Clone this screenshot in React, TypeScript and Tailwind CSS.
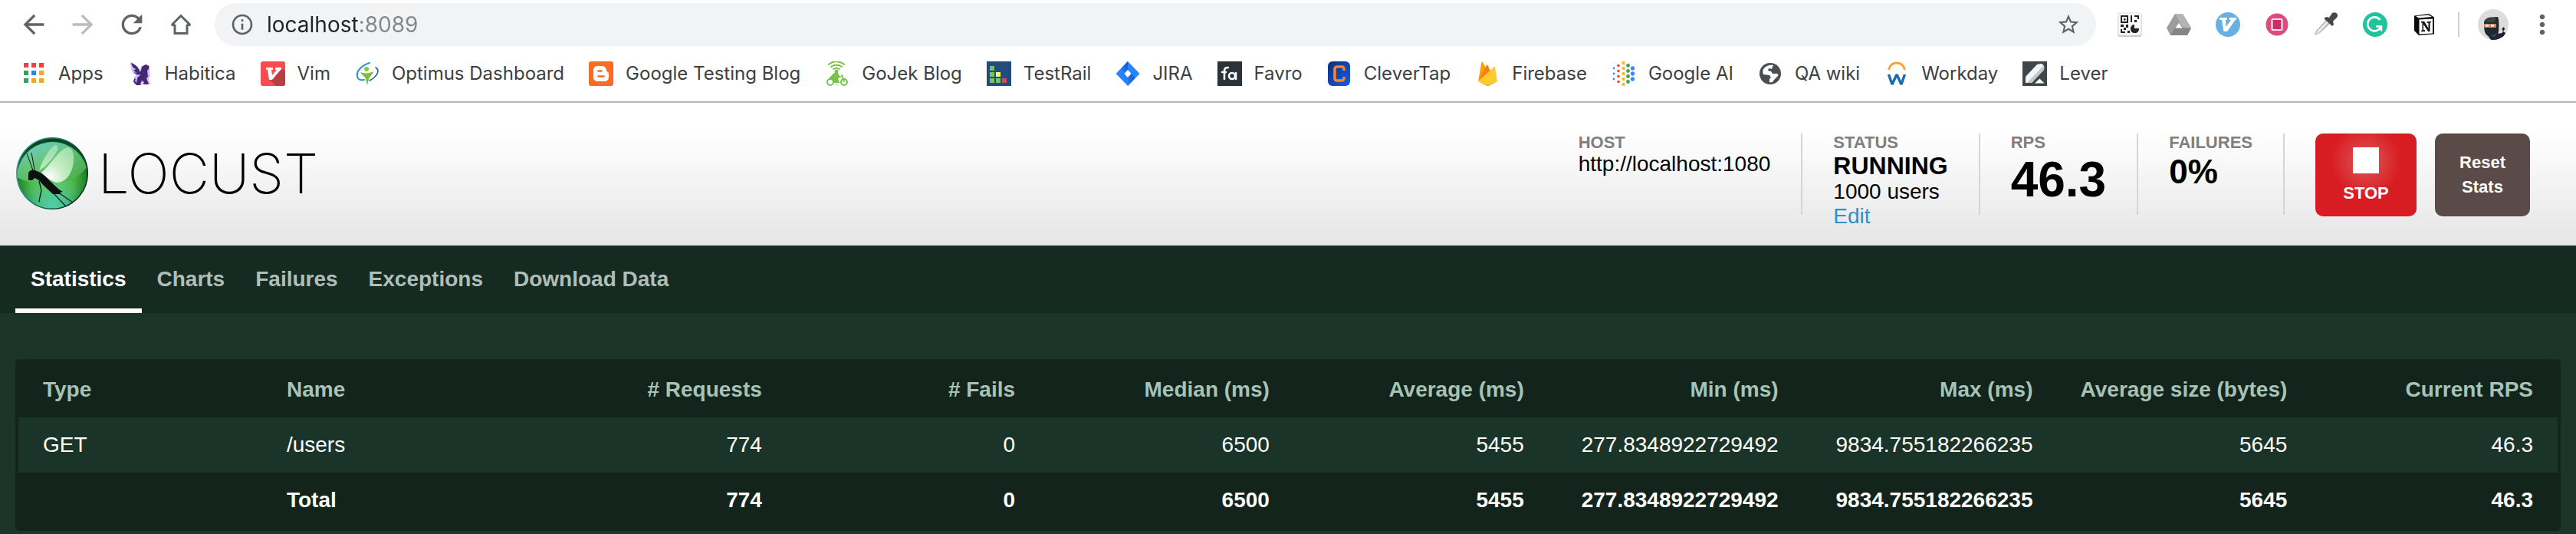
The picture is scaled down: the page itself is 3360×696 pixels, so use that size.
import React from "react";
import { MdArrowBack, MdArrowForward, MdInfoOutline, MdMoreVert, MdRefresh, MdStarBorder } from "react-icons/md";

type IconProps = { children: React.ReactNode; box?: string };

function Glyph({ children, box = "0 0 32 32" }: IconProps) {
  return (
    <svg viewBox={box} className="size-8 shrink-0" aria-hidden="true">
      {children}
    </svg>
  );
}

const appColors = ["#f43f3a", "#f43f3a", "#f43f3a", "#34a05f", "#2a84f5", "#efa62a", "#34a05f", "#efa62a", "#efa62a"];

const AppsIcon = (
  <Glyph>
    {appColors.map((c, i) => (
      <rect key={i} x={3 + (i % 3) * 10} y={2 + Math.floor(i / 3) * 10} width="6" height="6" fill={c} />
    ))}
  </Glyph>
);

const HabiticaIcon = (
  <Glyph>
    <g stroke="#d3bdf5" strokeWidth="2" strokeLinejoin="round" fill="#d3bdf5">
      <path d="M4 2l7 5 5 6 2-6 6-2 4 2-1 4 1 8-2 4 2 6h-17l-4-3 3-1-1-4 4-4-6-2-2-5z" />
    </g>
    <g fill="#432874">
      <path d="M4 2c3 1 7 3 10 8l2 5c-4 1-7-1-9-4 1 0 3 0 3-1C7 9 5 6 4 2z" />
      <path d="M17 12l1-5 5-3 2 1 2 1v4l-2 2 1 8-2 2 2 5 1 3h-7l1-3-3-2-2 4 1 2h-6l-3-3c-1-2-1-5 1-6l1 1c-1 1-1 3 0 4l1 1 1-6c1-3 4-3 4-5-3 1-7 0-8-3 4 2 7 1 9-2z" />
    </g>
  </Glyph>
);

const VimIcon = (
  <Glyph>
    <rect width="32" height="32" rx="3" fill="#f94c51" />
    <path d="M27 8l5 5v16a3 3 0 0 1-3 3H20l-8-8z" fill="#b93e44" />
    <path d="M7 8h9v3h-2l1 7 6-7h-2V8h8v3h-1L15 24h-4L9 11H7z" fill="#fff" />
  </Glyph>
);

const OptimusIcon = (
  <Glyph>
    <g fill="none" strokeLinecap="round">
      <path d="M19 2C9 5 1 13 3 20c1 4 5 5 9 4" stroke="#2c8fd0" strokeWidth="2" />
      <path d="M27 8c5 3 3 9-2 13-2 2-4 3-6 4" stroke="#1d62a8" strokeWidth="1.6" />
    </g>
    <circle cx="15" cy="10" r="3" fill="#8cc63f" />
    <path d="M7 14c5 2 12 2 17-1-1 5-5 7-6 10l-2 8-2-8c-1-4-5-5-7-9z" fill="#7ebf37" />
  </Glyph>
);

const BloggerIcon = (
  <Glyph>
    <rect width="32" height="32" rx="3" fill="#fc6b22" />
    <path d="M12 6h5c4 0 6 3 6 6 0 2 3 1 3 4v4c0 4-2 6-6 6h-8c-4 0-6-2-6-6v-8c0-4 2-6 6-6z" fill="#fff" />
    <path d="M12.500 12.500h4M12.500 19.500h7" stroke="#fc6b22" strokeWidth="2.600" strokeLinecap="round" />
  </Glyph>
);

const GojekIcon = (
  <Glyph>
    <g fill="none" stroke="#79c24a" strokeWidth="2" strokeLinecap="round">
      <path d="M5 4c6-5 14-5 20 0M8 7c4-3 10-3 14 0M11 10c3-2 5-2 8 0" />
      <circle cx="7" cy="27" r="4" />
      <circle cx="25" cy="27" r="4" />
      <path d="M22 18l3 8" />
    </g>
    <circle cx="15" cy="13" r="2.500" fill="#79c24a" />
    <path d="M12 15h5l2 4 4 1-6 2 2 6h-7c0-4-3-5-7-6z" fill="#79c24a" />
    <path d="M14 28l5 4-6-1z" fill="#ddd" />
  </Glyph>
);

const TestRailIcon = (
  <Glyph>
    <rect width="32" height="32" fill="#224c7c" />
    <g fill="#7ac35b">
      <rect x="4" y="6" width="6" height="6" />
      <rect x="4" y="14" width="6" height="6" />
      <rect x="4" y="22" width="6" height="6" />
      <rect x="12" y="22" width="6" height="6" />
    </g>
    <rect x="12" y="14" width="6" height="6" fill="#fbf36a" />
    <rect x="20" y="22" width="6" height="6" fill="#d9475c" />
  </Glyph>
);

const JiraIcon = (
  <Glyph>
    <defs>
      <linearGradient id="jira-a" x1="1" y1="0" x2="0" y2="1">
        <stop offset="0" stopColor="#1252c4" />
        <stop offset="1" stopColor="#2684ff" />
      </linearGradient>
    </defs>
    <path d="M16 0l15.500 16L16 32 .5 16z" fill="#2684ff" />
    <path d="M16 0v11.500L11.500 16 7 9.500z" fill="url(#jira-a)" />
    <path d="M16 32V20.500L20.500 16l5 6z" fill="url(#jira-a)" />
    <path d="M16 11l4.500 5-4.500 5-4.500-5z" fill="#fff" />
  </Glyph>
);

const FavroIcon = (
  <Glyph>
    <rect width="32" height="32" fill="#2b323a" />
    <g fill="none" stroke="#fff" strokeWidth="2.600" strokeLinecap="round">
      <path d="M9 23V12c0-3 2-4 5-4M6 14h5" />
      <circle cx="19" cy="19" r="4" />
      <path d="M24 15v8" />
    </g>
  </Glyph>
);

const CleverTapIcon = (
  <Glyph>
    <defs>
      <linearGradient id="ct" x1="0" y1="0" x2="1" y2="1">
        <stop offset="0" stopColor="#0f3078" />
        <stop offset="1" stopColor="#125cf0" />
      </linearGradient>
    </defs>
    <rect x="1" width="29" height="32" rx="6" fill="url(#ct)" />
    <path d="M22 12V10c0-2-1-3-3-3h-6c-2 0-3 1-3 3v12c0 2 1 3 3 3h6c2 0 3-1 3-3v-2" fill="none" stroke="#f98427" strokeWidth="3.600" />
  </Glyph>
);

const FirebaseIcon = (
  <Glyph>
    <path d="M4 26L8.500 1c0-1 1-1 1.500 0l5 9z" fill="#ffa000" />
    <path d="M4 26L15 5c.5-1 1-1 1.500 0l3.500 8z" fill="#f57f17" />
    <path d="M4 26L24.500 7.500c.8-.7 1.500-.4 1.600.4L29 26l-11 5.500c-1 .6-2 .6-3 0z" fill="#ffca2f" />
    <path d="M4 26l11 4.500c1 .6 2 .6 3 0L29 26l-11 5.700c-1 .5-2 .5-3 0z" fill="#f5a623" />
  </Glyph>
);

const aiColumns = [
  { x: 3, r: 1.4, c: "#4285f4", ys: [9, 16, 23] },
  { x: 9, r: 1.8, c: "#ea4335", ys: [5.5, 12.500, 19.500, 26.500] },
  { x: 15.500, r: 2.2, c: "#fbbc28", ys: [2, 9, 16, 23, 30] },
  { x: 21.500, r: 2.4, c: "#34a853", ys: [5.5, 12.500, 19.500, 26.500] },
  { x: 27.500, r: 2.7, c: "#4285f4", ys: [9, 16, 23] },
];

const GoogleAiIcon = (
  <Glyph>
    {aiColumns.flatMap((col) => col.ys.map((y) => <circle key={`${col.x}-${y}`} cx={col.x} cy={y} r={col.r} fill={col.c} />))}
  </Glyph>
);

const WikiIcon = (
  <Glyph>
    <circle cx="16" cy="16" r="14" fill="#4a4d51" />
    <path
      d="M20 5c-5-1-10 1-13 5-1 3-1 5 0 7l8 1 2 3-2 2v4c2 1 5 0 6-3l5-5c1-2 0-3-2-3h-5l-2-3-4-1 1-3 4 1 1-3z"
      fill="#fff"
    />
  </Glyph>
);

const WorkdayIcon = (
  <Glyph>
    <path d="M5.500 11C7 5 10.500 2 16 2s9 3 10.500 9" fill="none" stroke="#f9a638" strokeWidth="3" />
    <path d="M5.500 17l4.500 13 5.500-12h1L22 30l4.500-13" fill="none" stroke="#1a6cb0" strokeWidth="3.400" strokeLinejoin="bevel" />
  </Glyph>
);

const LeverIcon = (
  <Glyph>
    <rect width="32" height="32" fill="#3d474b" />
    <path d="M4 20L19 4l5-1c4 1 5 4 4 8L12 28H4z" fill="#f5f5f5" />
    <path d="M28 11L12 28H6L27 6c1 1 1 3 1 5z" fill="#c4c6c7" />
    <path d="M16 28.500l6.500-6 6 6z" fill="#fff" />
  </Glyph>
);

const bookmarks: { label: string; icon: React.ReactNode }[] = [
  { label: "Apps", icon: AppsIcon },
  { label: "Habitica", icon: HabiticaIcon },
  { label: "Vim", icon: VimIcon },
  { label: "Optimus Dashboard", icon: OptimusIcon },
  { label: "Google Testing Blog", icon: BloggerIcon },
  { label: "GoJek Blog", icon: GojekIcon },
  { label: "TestRail", icon: TestRailIcon },
  { label: "JIRA", icon: JiraIcon },
  { label: "Favro", icon: FavroIcon },
  { label: "CleverTap", icon: CleverTapIcon },
  { label: "Firebase", icon: FirebaseIcon },
  { label: "Google AI", icon: GoogleAiIcon },
  { label: "QA wiki", icon: WikiIcon },
  { label: "Workday", icon: WorkdayIcon },
  { label: "Lever", icon: LeverIcon },
];

const extensions: { label: string; icon: React.ReactNode }[] = [
  {
    label: "QR code",
    icon: (
      <Glyph>
        <rect x=".5" y="1.500" width="31" height="30.500" rx="2.500" fill="#c9c9c9" />
        <rect x="1" y="1" width="30" height="29" rx="2" fill="#fafafa" stroke="#ddd" />
        <g fill="#222">
          <path d="M4 4h10v10H4zM6 6v6h6V6z" fillRule="evenodd" />
          <rect x="8" y="8" width="2.500" height="2.500" />
          <path d="M17 4h2v9h-2zM22 4h6v5h-2V6h-4zM22 10h3v3h-3zM4 16h4v3H4zM11 16h3v4h-3zM8 20h3v3H8zM4 22h2v3h4v2H4zM13 24h3v3h-3z" />
          <path d="M22 16v5h6c0 4-2 6-5.500 6S17 25 17 21.500s2-5 5-5.500z" />
        </g>
      </Glyph>
    ),
  },
  {
    label: "Drive",
    icon: (
      <Glyph>
        <path d="M11 2h10l11 18.500-5 9.500H5L0 20.500z" fill="#9d9d9d" />
        <path d="M11 2h10l11 18.500H21.500z" fill="#b4b4b4" />
        <path d="M5 30l5.500-9.500H32L27 30z" fill="#858585" />
        <path d="M16 14l4.500 6.500h-9z" fill="#fff" />
      </Glyph>
    ),
  },
  {
    label: "Vimium",
    icon: (
      <Glyph>
        <circle cx="16" cy="16" r="16" fill="#68b0e2" />
        <path d="M5 7h10v3h-2l.5 9L20 10h-2V7h9v3h-1.500L15 25h-4.500L8 10H5z" fill="#fff" />
      </Glyph>
    ),
  },
  {
    label: "Screen capture",
    icon: (
      <Glyph>
        <circle cx="16" cy="16" r="14.500" fill="#d84d7d" />
        <rect x="9.500" y="9" width="13" height="14" rx="1" fill="#c92f66" stroke="#fbe3ec" strokeWidth="2.200" />
      </Glyph>
    ),
  },
  {
    label: "Color picker",
    icon: (
      <Glyph>
        <path d="M1 30l2-6L16 10l5 5L8 27z" fill="#b8b8b8" />
        <path d="M3 28l2-4L17 12l2 1L7 26z" fill="#f1f1f1" />
        <path d="M14 7l3-1 3 1 4-6c3-2 8 0 7 4-1 3-4 4-6 7l1 4-2 2L14 9z" fill="#474747" />
      </Glyph>
    ),
  },
  {
    label: "Grammarly",
    icon: (
      <Glyph>
        <circle cx="16" cy="16" r="16" fill="#20c39a" />
        <path d="M22.500 10A9 9 0 1 0 23.500 19M17 18.500h7v6" fill="none" stroke="#fff" strokeWidth="2.600" />
      </Glyph>
    ),
  },
  {
    label: "Notion",
    icon: (
      <Glyph>
        <path d="M3 4.500L22 2l7 4.500v22L9 30l-6-6z" fill="#0a0a0a" />
        <path d="M5 5l16.500-1.500L26 6 9 7.500z" fill="#fff" />
        <path d="M9.500 9.500l17.500-1v19l-17.500 1z" fill="#fff" />
        <path d="M12 12l4-.3 5.500 9V14l-2-.3v-1.500l5.500-.3v1.300l-1.500.5v11l-2 .8-6.500-10v7.500l2 .3V25l-5 .2V24l1.500-.5v-9.800L12 13.500z" fill="#111" />
      </Glyph>
    ),
  },
];

function Avatar() {
  return (
    <svg viewBox="0 0 40 40" className="size-10" aria-hidden="true">
      <defs>
        <clipPath id="avatar-clip">
          <circle cx="20" cy="20" r="20" />
        </clipPath>
      </defs>
      <g clipPath="url(#avatar-clip)">
        <rect width="40" height="40" fill="#dcdcdc" />
        <path d="M12 33l6 2 8-3 6-1 4 9H17z" fill="#20262b" />
        <path d="M30 34l3-6-2-2 3-3 1 3-2 3 3 2-3 7z" fill="#1d1d1d" />
        <path d="M8 18c0-5 5-7.500 10-7.500l8-.5c2 3 2 20 0 23-4 5-11 4-15 0-3-4-3-10-3-15z" fill="#23272a" />
        <path d="M8 19h16v5H8z" fill="#c98a5e" />
        <path d="M10 20.500h4v2h-4zM17 20.500h4v2h-4z" fill="#fff" />
        <path d="M12 13c4-2 8-2 12-1l-2 5H9z" fill="#3c4246" />
        <path d="M17 35l8-4-3 5z" fill="#2c4b78" />
      </g>
    </svg>
  );
}

function BrowserBar() {
  return (
    <div className="border-b-2 border-[#b6b6b6] bg-white font-['Inter',sans-serif]">
      <div className="flex items-center px-3 pt-1 text-[#5f6368]">
        <button type="button" aria-label="Back" className="flex w-16 justify-center">
          <MdArrowBack className="size-10" />
        </button>
        <button type="button" aria-label="Forward" className="flex w-16 justify-center text-[#babcbe]">
          <MdArrowForward className="size-10" />
        </button>
        <button type="button" aria-label="Reload" className="flex w-16 justify-center">
          <MdRefresh className="size-10" />
        </button>
        <button type="button" aria-label="Home" className="flex w-16 justify-center">
          <svg viewBox="0 0 32 32" className="size-8" aria-hidden="true">
            <path d="M8 16v11.500h16V16M3.500 16.500H8M24 16.500h4.500M4 16.500L16 4.500l12 12" fill="none" stroke="currentColor" strokeWidth="3" />
          </svg>
        </button>
        <div className="ml-3 flex h-14 flex-1 items-center rounded-full bg-[#f1f3f4] px-5">
          <MdInfoOutline className="size-8 shrink-0" />
          <input
            type="text"
            aria-label="Address"
            defaultValue="localhost:8089"
            className="ml-4 min-w-0 flex-1 bg-[linear-gradient(90deg,#202124_120px,#80868b_120px)] bg-clip-text text-[28px] leading-10 text-transparent caret-black outline-none"
          />
          <button type="button" aria-label="Bookmark this page">
            <MdStarBorder className="size-8" />
          </button>
        </div>
        <div className="ml-3 flex items-center">
          {extensions.map((e) => (
            <button key={e.label} type="button" aria-label={e.label} className="flex w-16 justify-center">
              {e.icon}
            </button>
          ))}
        </div>
        <span className="mx-3 h-8 w-0.5 bg-[#cdcfd1]" />
        <button type="button" aria-label="Profile" className="flex w-16 justify-center">
          <Avatar />
        </button>
        <button type="button" aria-label="Menu" className="flex w-16 justify-center">
          <MdMoreVert className="size-10" />
        </button>
      </div>
      <nav aria-label="Bookmarks" className="flex items-center gap-8 py-5 pl-7 text-2xl leading-8 text-[#3c4043]">
        {bookmarks.map((b) => (
          <a key={b.label} href="#" className="flex items-center gap-4 whitespace-nowrap">
            {b.icon}
            {b.label}
          </a>
        ))}
      </nav>
    </div>
  );
}

function Logo() {
  return (
    <a href="#" className="flex items-center gap-3 text-black" aria-label="Locust">
      <svg viewBox="10 8 96 96" className="size-24" aria-hidden="true">
        <defs>
          <radialGradient id="orb" cx=".5" cy=".6" r=".56">
            <stop offset="0" stopColor="#6fd45f" />
            <stop offset=".55" stopColor="#4ab243" />
            <stop offset=".88" stopColor="#1a7f2c" />
            <stop offset="1" stopColor="#06461e" />
          </radialGradient>
          <linearGradient id="gloss" x1=".15" y1="0" x2=".8" y2="1">
            <stop offset="0" stopColor="#7fe0e6" />
            <stop offset=".45" stopColor="#6cca80" />
            <stop offset="1" stopColor="#49ab4a" />
          </linearGradient>
          <radialGradient id="shine" cx=".5" cy="1" r=".5">
            <stop offset="0" stopColor="#52d0b4" />
            <stop offset="1" stopColor="#52d0b4" stopOpacity="0" />
          </radialGradient>
          <radialGradient id="wing" gradientUnits="userSpaceOnUse" cx="54" cy="62" r="44">
            <stop offset="0" stopColor="#fff" />
            <stop offset=".45" stopColor="#d8f6d4" stopOpacity=".85" />
            <stop offset="1" stopColor="#c5efc9" stopOpacity=".65" />
          </radialGradient>
          <linearGradient id="rim" x1="0" y1="0" x2="1" y2=".45">
            <stop offset="0" stopColor="#4fb9bd" />
            <stop offset=".5" stopColor="#1e7d62" />
            <stop offset="1" stopColor="#062a12" />
          </linearGradient>
        </defs>
        <circle cx="58" cy="56" r="46.500" fill="url(#orb)" />
        <circle cx="58" cy="56" r="46.500" fill="url(#shine)" />
        <path d="M12 61a46.500 46.500 0 0 1 91-13c-8 12-22 19-40 21-20 2-38-1-51-8z" fill="url(#gloss)" opacity=".85" />
        <circle cx="58" cy="56" r="46.300" fill="none" stroke="url(#rim)" strokeWidth="1.400" />
        <path d="M41 52c4-12 13-29 21-33 5 0 4 6 0 12-6 9-13 17-21 21z" fill="url(#wing)" opacity=".8" />
        <path d="M44 55c13-11 23-31 35-33 9 1 9 21 3 33-5 11-15 15-22 12-6-3-12-7-16-12z" fill="url(#wing)" />
        <g fill="none" stroke="#101416" strokeWidth="1.300">
          <path d="M33 52l-8-22M35 51l-4-22" strokeWidth="1" />
          <path d="M41 66l3 12-3 14 1 1" />
          <path d="M58 80l18 19M65 80l20 14" stroke="#13224a" />
        </g>
        <path d="M27 57c0-5 6-7 11-4 7 2 13 8 17 13l12 11 5 3-4 1 1 2H59L46 71c-3-4-5-7-11-9l-3 3h-5z" fill="#0d1011" />
      </svg>
      <span className="font-['Inter',sans-serif] text-7xl leading-[72px] font-extralight">LOCUST</span>
    </a>
  );
}

const boxClass = "h-[106px] border-r-2 border-[#d5d5d5] px-10";
const labelClass = "text-[22px] leading-6 font-bold text-[#7f7f7f]";

function Header() {
  return (
    <header className="flex items-start justify-between bg-linear-to-b from-white from-20% to-[#e5e5e5] pt-10 pr-[60px] pb-[38px] pl-5">
      <div className="pt-1">
        <Logo />
      </div>
      <div className="flex items-start text-black">
        <div className={boxClass}>
          <div className={labelClass}>HOST</div>
          <div className="text-[28px] leading-8">http://localhost:1080</div>
        </div>
        <div className={boxClass}>
          <div className={labelClass}>STATUS</div>
          <div className="text-[32px] leading-9 font-bold">RUNNING</div>
          <div className="text-[28px] leading-8">1000 users</div>
          <a href="#" className="block text-[28px] leading-8 text-[#3490c4]">
            Edit
          </a>
        </div>
        <div className={boxClass}>
          <div className={labelClass}>RPS</div>
          <div className="text-[64px] leading-[72px] font-bold">46.3</div>
        </div>
        <div className={boxClass}>
          <div className={labelClass}>FAILURES</div>
          <div className="text-[44px] leading-[52px] font-bold">0%</div>
        </div>
        <button
          type="button"
          className="ml-10 flex h-[108px] w-[132px] flex-col items-center rounded-[10px] bg-[radial-gradient(circle_at_50%_36px,#e04c50_0px,#dc3f43_20px,#d71d21_46px)] pt-[18px] text-[22px] leading-8 font-bold text-white"
        >
          <span className="mb-2.5 size-[34px] bg-white" />
          STOP
        </button>
        <button
          type="button"
          className="ml-6 h-[108px] w-[124px] rounded-[10px] bg-[#5a4b49] px-6 text-[22px] leading-8 font-bold text-white"
        >
          Reset Stats
        </button>
      </div>
    </header>
  );
}

const tabs = ["Statistics", "Charts", "Failures", "Exceptions", "Download Data"];

function Tabs() {
  return (
    <nav aria-label="Reports" className="flex bg-[#152b22] px-5 text-[28px] leading-8 font-bold">
      {tabs.map((t, i) => (
        <a
          key={t}
          href="#"
          aria-current={i === 0 ? "page" : undefined}
          className={
            i === 0
              ? "border-b-6 border-white px-5 pt-7 pb-[22px] text-white"
              : "border-b-6 border-transparent px-5 pt-7 pb-[22px] text-[#b0beb7]"
          }
        >
          {t}
        </a>
      ))}
    </nav>
  );
}

const columns = [
  { label: "Type", width: "w-[9.6%]" },
  { label: "Name", width: "w-[10.65%]" },
  { label: "# Requests", width: "w-[10%]" },
  { label: "# Fails", width: "w-[9.97%]" },
  { label: "Median (ms)", width: "w-[10.02%]" },
  { label: "Average (ms)", width: "w-[10.02%]" },
  { label: "Min (ms)", width: "w-[10.02%]" },
  { label: "Max (ms)", width: "w-[10.02%]" },
  { label: "Average size (bytes)", width: "w-[10.02%]" },
  { label: "Current RPS", width: "w-[9.68%]" },
];

const rows = [
  ["GET", "/users", "774", "0", "6500", "5455", "277.8348922729492", "9834.755182266235", "5645", "46.3"],
  ["", "Total", "774", "0", "6500", "5455", "277.8348922729492", "9834.755182266235", "5645", "46.3"],
];

function StatsTable() {
  return (
    <div className="rounded-md bg-[#12241c] p-1">
      <table className="w-full table-fixed text-[28px] leading-8 whitespace-nowrap text-white">
        <thead>
          <tr className="text-[#a7c3b6]">
            {columns.map((c, i) => (
              <th
                key={c.label}
                scope="col"
                className={`${c.width} py-5 font-bold ${i < 2 ? "px-8 text-left" : i === 8 ? "pr-8 text-right" : "px-8 text-right"}`}
              >
                {c.label}
              </th>
            ))}
          </tr>
        </thead>
        <tbody>
          {rows.map((r, ri) => (
            <tr key={ri} className={ri === 0 ? "bg-[#1a342a]" : "font-bold"}>
              {r.map((v, i) => (
                <td key={i} className={i < 2 ? "px-8 py-5 text-left" : "px-8 py-5 text-right"}>
                  {v}
                </td>
              ))}
            </tr>
          ))}
        </tbody>
      </table>
    </div>
  );
}

export default function App() {
  return (
    <div className="min-h-screen bg-[#1b3529] font-['Liberation_Sans',Arial,sans-serif]">
      <BrowserBar />
      <Header />
      <Tabs />
      <main className="px-5 pt-[60px]">
        <StatsTable />
      </main>
    </div>
  );
}
